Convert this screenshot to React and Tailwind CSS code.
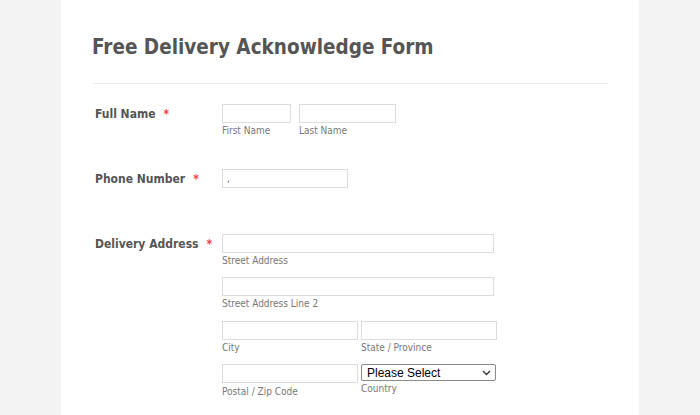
export default function App() {
  const font = { fontFamily: '"DejaVu Sans Condensed", "DejaVu Sans", sans-serif' }

  const Input = ({ className = '' }) => (
    <input
      type="text"
      className={`block h-[19px] border border-[#dcdcdc] bg-white outline-none ${className}`}
    />
  )

  const Sub = ({ children }) => (
    <div className="text-[10px] leading-[16px] text-[#777]">{children}</div>
  )

  const Label = ({ children }) => (
    <div className="w-[127px] shrink-0 whitespace-nowrap pt-[2px] text-[12px] font-bold leading-[17px] text-[#555]">
      {children}
      <span className="ml-[8px] text-[#f2404a]">*</span>
    </div>
  )

  return (
    <div className="flex min-h-screen bg-[#f3f3f3]" style={font}>
      <div className="ml-[61px] min-h-[415px] w-[578px] bg-white px-[31px]">
        <div className="border-b border-[#ededed] pt-[33px] pb-[22px]">
          <h1 className="text-[20.5px] font-bold leading-[28px] text-[#555]">
            Free Delivery Acknowledge Form
          </h1>
        </div>

        <div className="pl-[3px]">
          {/* Full name */}
          <div className="mt-[20px] flex">
            <Label>Full Name</Label>
            <div className="flex gap-[8px]">
              <div>
                <Input className="w-[69px]" />
                <Sub>First Name</Sub>
              </div>
              <div>
                <Input className="w-[97px]" />
                <Sub>Last Name</Sub>
              </div>
            </div>
          </div>

          {/* Phone */}
          <div className="mt-[30px] flex">
            <Label>Phone Number</Label>
            <div className="flex h-[19px] w-[126px] items-center border border-[#dcdcdc] pl-[4px] text-[10px] text-[#555]">
              ,
            </div>
          </div>

          {/* Address */}
          <div className="mt-[46px] flex">
            <Label>Delivery Address</Label>
            <div>
              <Input className="w-[272px]" />
              <Sub>Street Address</Sub>
              <Input className="mt-[8px] w-[272px]" />
              <Sub>Street Address Line 2</Sub>
              <div className="mt-[9px] flex gap-[3px]">
                <div>
                  <Input className="w-[136px]" />
                  <Sub>City</Sub>
                </div>
                <div>
                  <Input className="w-[136px]" />
                  <Sub>State / Province</Sub>
                </div>
              </div>
              <div className="mt-[8px] flex gap-[3px]">
                <div>
                  <Input className="w-[136px]" />
                  <div className="mt-[1px]">
                    <Sub>Postal / Zip Code</Sub>
                  </div>
                </div>
                <div>
                  <div
                    className="flex h-[17px] w-[135px] items-center justify-between rounded-[2px] border border-[#8a8a8a] bg-white pr-[4px] pl-[5px] text-[12px] text-black"
                    style={{ fontFamily: '"Liberation Sans", Arial, sans-serif' }}
                  >
                    <span>Please Select</span>
                    <svg width="9" height="6" viewBox="0 0 9 6" fill="none">
                      <path d="M1 1l3.5 3.5L8 1" stroke="#333" strokeWidth="1.3" />
                    </svg>
                  </div>
                  <Sub>Country</Sub>
                </div>
              </div>
            </div>
          </div>
        </div>
      </div>
    </div>
  )
}
